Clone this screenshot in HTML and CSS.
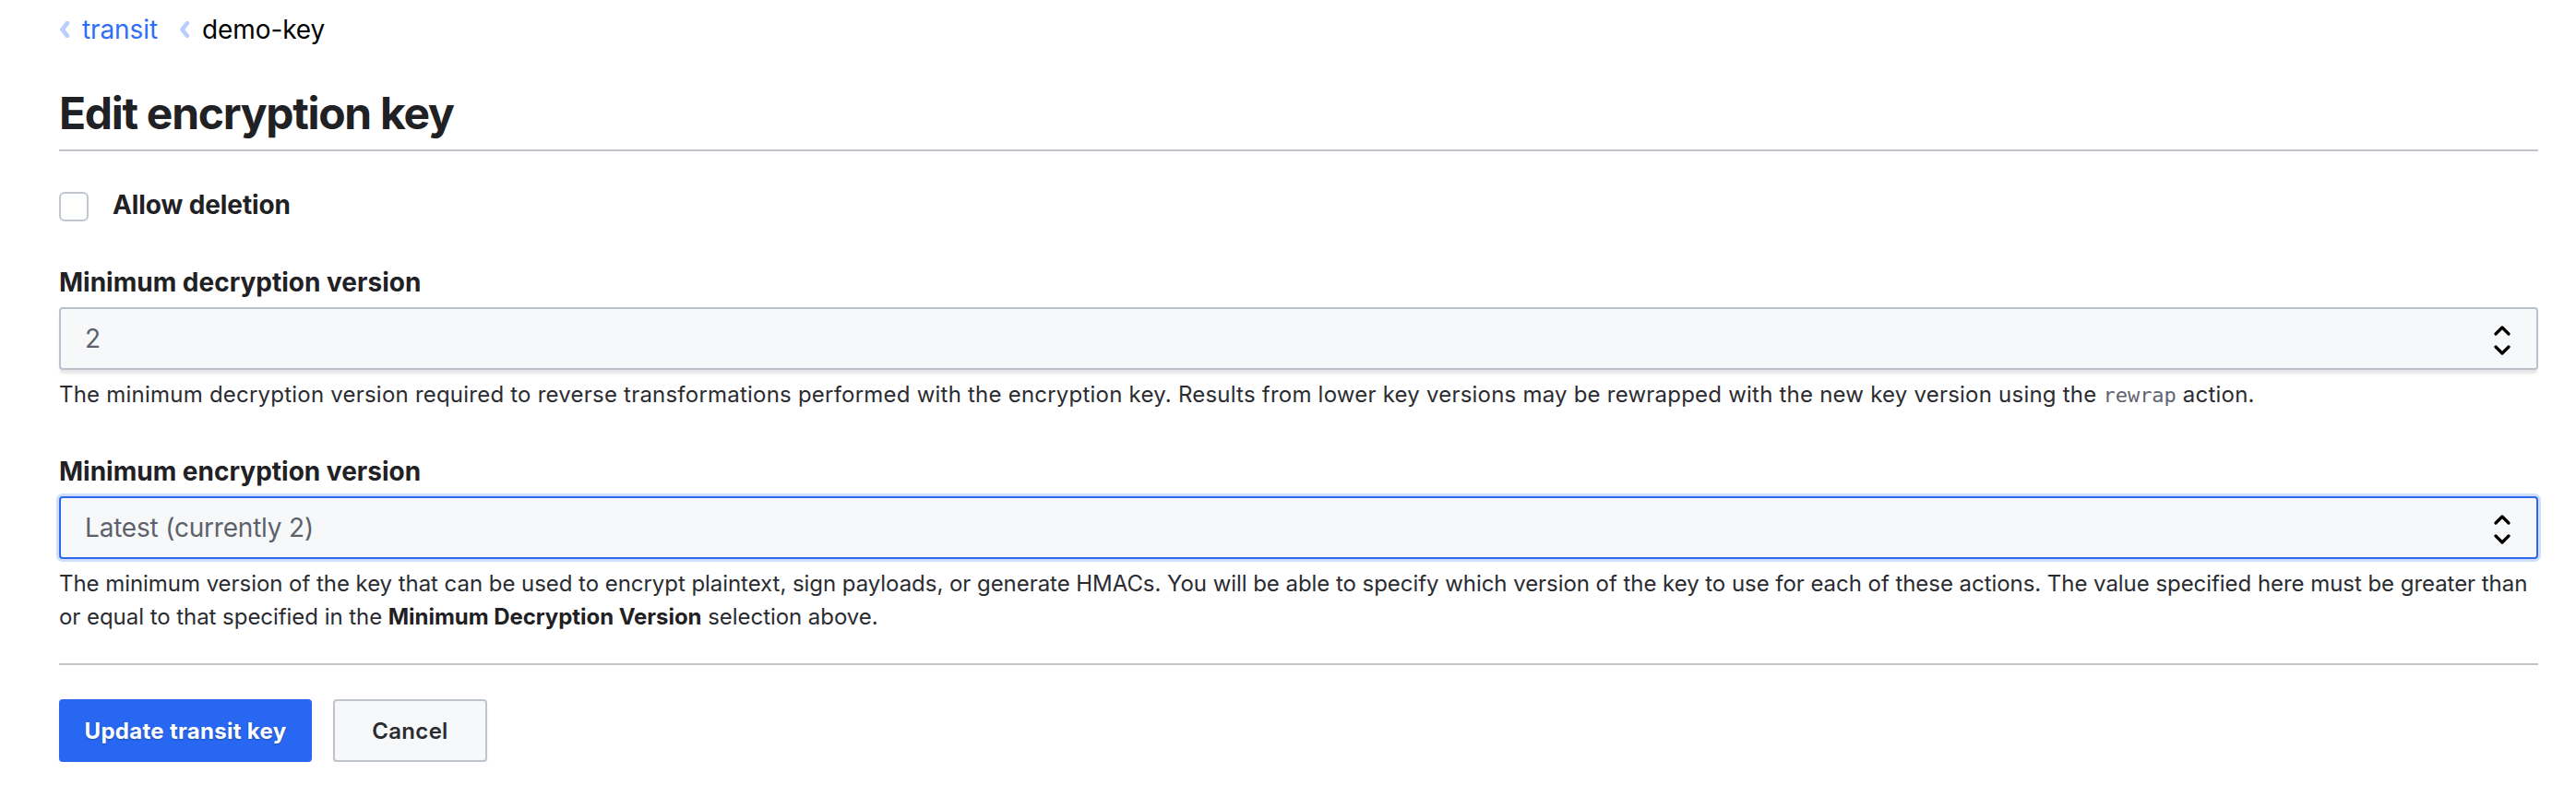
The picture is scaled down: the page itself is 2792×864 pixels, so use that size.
FILE: index.html
```html
<!DOCTYPE html>
<html lang="en">
<head>
<meta charset="utf-8">
<title>Edit encryption key</title>
<link rel="stylesheet" href="styles.css">
</head>
<body>
<div class="page">
  <nav class="breadcrumbs">
    <span class="crumb">
      <svg class="crumb-chev" width="12" height="18" viewBox="0 0 12 18"><path d="M9 2 L3.5 9 L9 16" fill="none" stroke="#b9cefc" stroke-width="4.5" stroke-linecap="round" stroke-linejoin="round"/></svg>
      <a class="crumb-link" href="#">transit</a>
    </span>
    <span class="crumb">
      <svg class="crumb-chev" width="12" height="18" viewBox="0 0 12 18"><path d="M9 2 L3.5 9 L9 16" fill="none" stroke="#b9cefc" stroke-width="4.5" stroke-linecap="round" stroke-linejoin="round"/></svg>
      <span class="crumb-current">demo-key</span>
    </span>
  </nav>

  <h1 class="title">Edit encryption key</h1>

  <div class="check-row">
    <span class="checkbox"></span>
    <span class="check-label">Allow deletion</span>
  </div>

  <div class="field field-first">
    <div class="label">Minimum decryption version</div>
    <div class="select">
      <span class="select-value">2</span>
      <svg class="select-arrows" width="18" height="34" viewBox="0 0 18 34"><path d="M2 10 L9 3 L16 10" fill="none" stroke="#000" stroke-width="3.2" stroke-linecap="round" stroke-linejoin="round"/><path d="M2 24 L9 31 L16 24" fill="none" stroke="#000" stroke-width="3.2" stroke-linecap="round" stroke-linejoin="round"/></svg>
    </div>
    <p class="help">The minimum decryption version required to reverse transformations performed with the encryption key. Results from lower key versions may be rewrapped with the new key version using the <code class="code">rewrap</code> action.</p>
  </div>

  <div class="field">
    <div class="label">Minimum encryption version</div>
    <div class="select select-focus">
      <span class="select-value">Latest (currently 2)</span>
      <svg class="select-arrows" width="18" height="34" viewBox="0 0 18 34"><path d="M2 10 L9 3 L16 10" fill="none" stroke="#000" stroke-width="3.2" stroke-linecap="round" stroke-linejoin="round"/><path d="M2 24 L9 31 L16 24" fill="none" stroke="#000" stroke-width="3.2" stroke-linecap="round" stroke-linejoin="round"/></svg>
    </div>
    <p class="help help-tight">The minimum version of the key that can be used to encrypt plaintext, sign payloads, or generate HMACs. You will be able to specify which version of the key to use for each of these actions. The value specified here must be greater than or equal to that specified in the <strong>Minimum Decryption Version</strong> selection above.</p>
  </div>

  <div class="actions">
    <button class="btn btn-primary" type="button">Update transit key</button>
    <button class="btn btn-secondary" type="button">Cancel</button>
  </div>
</div>
</body>
</html>
```

FILE: styles.css
```css
* { box-sizing: border-box; }

body {
  margin: 0;
  background: #ffffff;
  font-family: Inter, "Noto Sans", sans-serif;
  color: #1f2124;
}

.page {
  padding: 12px 41px 0 64px;
}

.breadcrumbs {
  display: flex;
  align-items: center;
  gap: 23px;
  height: 40px;
  font-size: 28px;
  line-height: 40px;
  letter-spacing: -0.1px;
}

.crumb {
  display: flex;
  align-items: center;
  gap: 13px;
}

.crumb-chev { display: block; }

.crumb-link {
  color: #2f6ef6;
  text-decoration: none;
}

.crumb-current { color: #000; }

.title {
  margin: 43px 0 0;
  padding-bottom: 11px;
  border-bottom: 2px solid #bfc4cc;
  font-size: 48px;
  line-height: 56px;
  font-weight: 700;
  letter-spacing: -1.3px;
  color: #1f2124;
}

.check-row {
  display: flex;
  align-items: flex-start;
  gap: 26px;
  margin-top: 44px;
  height: 32px;
}

.checkbox {
  width: 32px;
  height: 32px;
  border: 2px solid #c2c7cf;
  border-radius: 6px;
  background: #fff;
  flex: none;
}

.check-label {
  font-size: 28px;
  line-height: 32px;
  font-weight: 700;
  letter-spacing: -0.1px;
  margin-top: -2px;
}

.field { margin-top: 44px; }
.field-first { margin-top: 46px; }

.label {
  font-size: 28px;
  line-height: 40px;
  font-weight: 700;
  letter-spacing: 0;
  color: #1f2124;
}

.select {
  margin-top: 7px;
  height: 68px;
  display: flex;
  align-items: center;
  justify-content: space-between;
  padding: 0 28px 0 26px;
  background: #f7f8fa;
  border: 2px solid #bac1cc;
  border-radius: 4px;
  box-shadow: 0 5px 3px -1px rgba(0, 0, 0, 0.1);
}

.select-focus {
  border-color: #2b69f0;
  box-shadow: 0 0 0 3px rgba(43, 105, 240, 0.22);
}

.select-value {
  font-size: 28px;
  color: #5c616b;
  letter-spacing: -0.2px;
}

.select-arrows { display: block; margin-top: 3px; }

.help {
  margin: 9px 0 0;
  font-size: 24px;
  line-height: 36px;
  color: #2a2c31;
  letter-spacing: 0.22px;
}

.help-tight {
  letter-spacing: -0.05px;
}

.help strong { font-weight: 700; color: #1f2124; }

.code {
  font-family: "DejaVu Sans Mono", "Liberation Mono", monospace;
  font-size: 22px;
  color: #5f6470;
  letter-spacing: 0;
}

.actions {
  display: flex;
  gap: 23px;
  margin-top: 32px;
  padding-top: 37px;
  border-top: 2px solid #bfc4cc;
}

.btn {
  height: 68px;
  border-radius: 4px;
  font-family: Inter, "Noto Sans", sans-serif;
  font-size: 24px;
  font-weight: 700;
  letter-spacing: 0.3px;
  cursor: pointer;
  box-shadow: 0 6px 4px -2px rgba(0, 0, 0, 0.13);
}

.btn-primary {
  width: 274px;
  background: #2767f2;
  border: 2px solid #2767f2;
  color: #fff;
  text-shadow: 0 1px 2px rgba(0, 0, 0, 0.25);
}

.btn-secondary {
  width: 167px;
  background: #f7f8fa;
  border: 2px solid #bfc4cc;
  color: #2a2c31;
  font-weight: 600;
}
```
